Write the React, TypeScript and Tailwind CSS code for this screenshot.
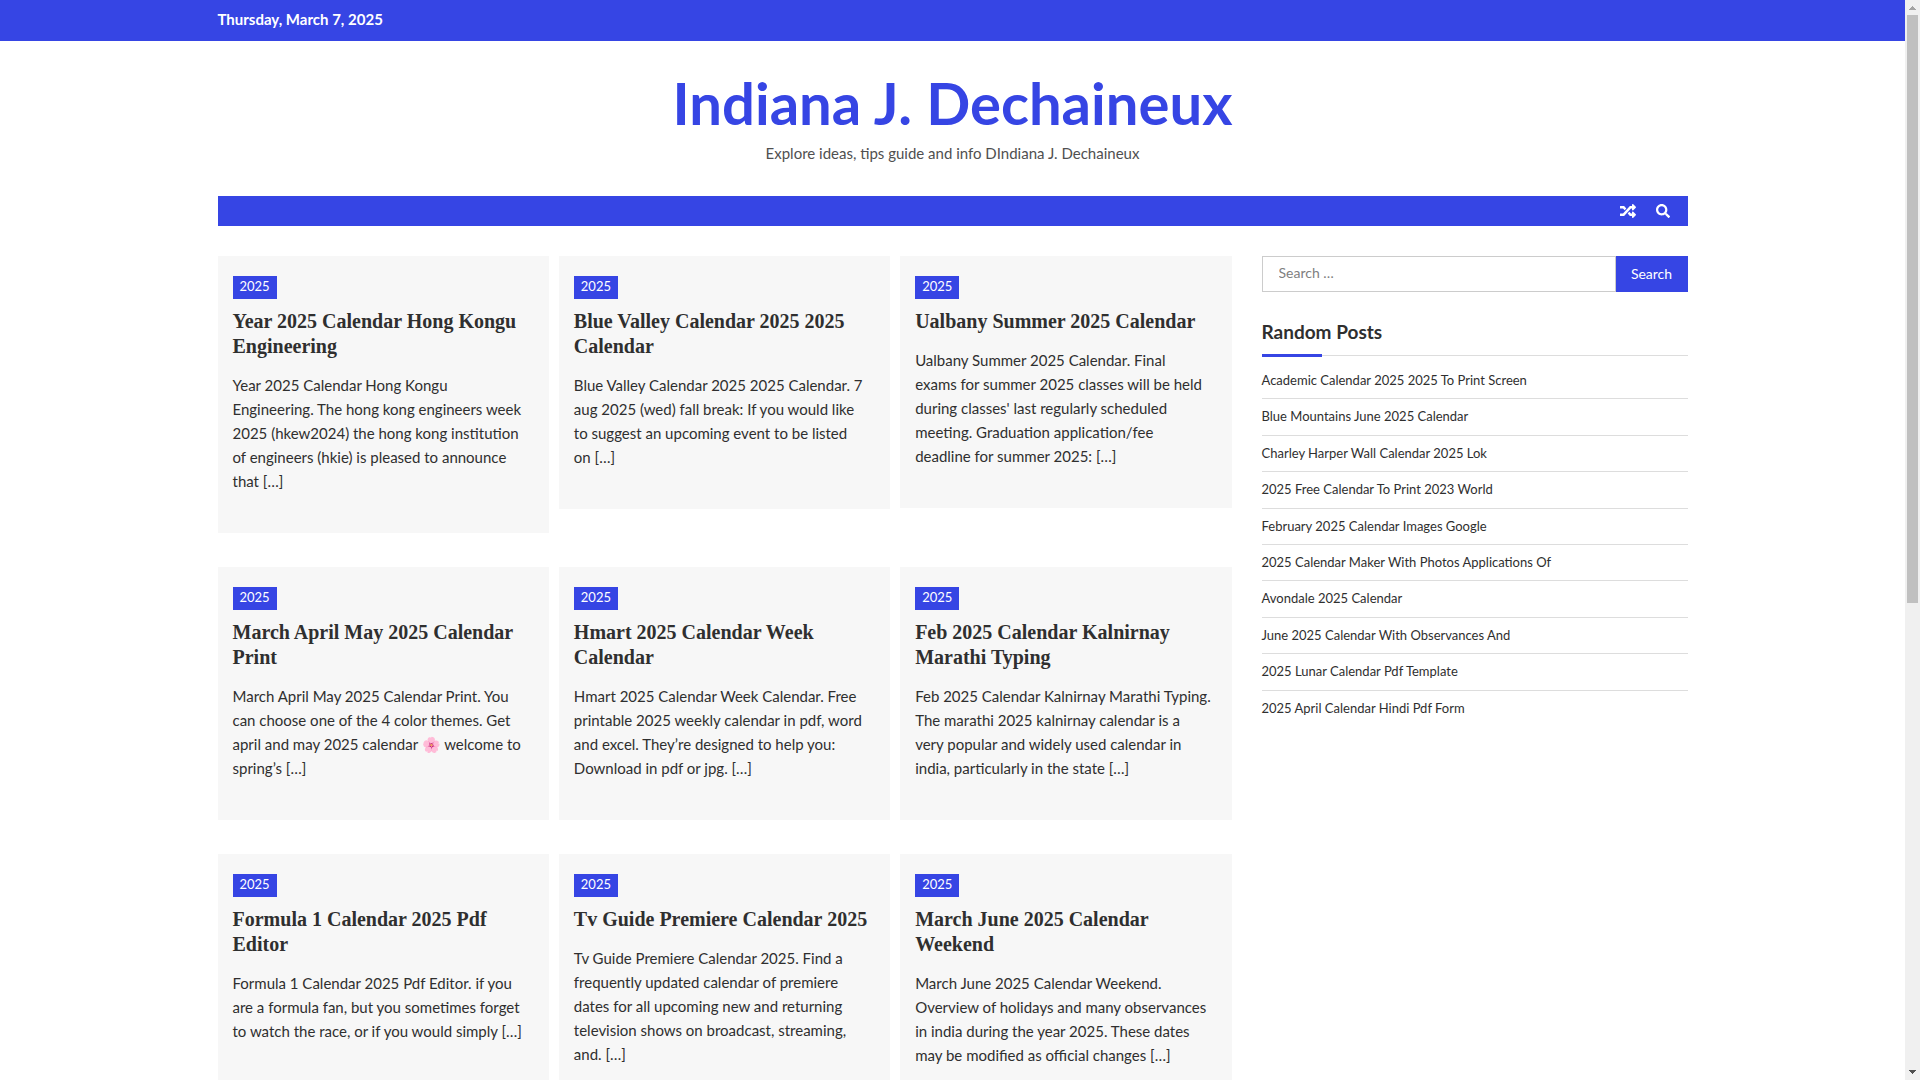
import { FaRandom, FaSearch } from 'react-icons/fa';

const posts = [
  {
    title: 'Year 2025 Calendar Hong Kongu\nEngineering',
    excerpt:
      'Year 2025 Calendar Hong Kongu\nEngineering. The hong kong engineers week\n2025 (hkew2024) the hong kong institution\nof engineers (hkie) is pleased to announce\nthat […]',
  },
  {
    title: 'Blue Valley Calendar 2025 2025\nCalendar',
    excerpt:
      'Blue Valley Calendar 2025 2025 Calendar. 7\naug 2025 (wed) fall break: If you would like\nto suggest an upcoming event to be listed\non […]',
  },
  {
    title: 'Ualbany Summer 2025 Calendar',
    excerpt:
      "Ualbany Summer 2025 Calendar. Final\nexams for summer 2025 classes will be held\nduring classes' last regularly scheduled\nmeeting. Graduation application/fee\ndeadline for summer 2025: […]",
  },
  {
    title: 'March April May 2025 Calendar\nPrint',
    excerpt:
      'March April May 2025 Calendar Print. You\ncan choose one of the 4 color themes. Get\napril and may 2025 calendar 🌸 welcome to\nspring’s […]',
  },
  {
    title: 'Hmart 2025 Calendar Week\nCalendar',
    excerpt:
      'Hmart 2025 Calendar Week Calendar. Free\nprintable 2025 weekly calendar in pdf, word\nand excel. They’re designed to help you:\nDownload in pdf or jpg. […]',
  },
  {
    title: 'Feb 2025 Calendar Kalnirnay\nMarathi Typing',
    excerpt:
      'Feb 2025 Calendar Kalnirnay Marathi Typing.\nThe marathi 2025 kalnirnay calendar is a\nvery popular and widely used calendar in\nindia, particularly in the state […]',
  },
  {
    title: 'Formula 1 Calendar 2025 Pdf\nEditor',
    excerpt:
      'Formula 1 Calendar 2025 Pdf Editor. if you\nare a formula fan, but you sometimes forget\nto watch the race, or if you would simply […]',
  },
  {
    title: 'Tv Guide Premiere Calendar 2025',
    excerpt:
      'Tv Guide Premiere Calendar 2025. Find a\nfrequently updated calendar of premiere\ndates for all upcoming new and returning\ntelevision shows on broadcast, streaming,\nand. […]',
  },
  {
    title: 'March June 2025 Calendar\nWeekend',
    excerpt:
      'March June 2025 Calendar Weekend.\nOverview of holidays and many observances\nin india during the year 2025. These dates\nmay be modified as official changes […]',
  },
];

const randomPosts = [
  'Academic Calendar 2025 2025 To Print Screen',
  'Blue Mountains June 2025 Calendar',
  'Charley Harper Wall Calendar 2025 Lok',
  '2025 Free Calendar To Print 2023 World',
  'February 2025 Calendar Images Google',
  '2025 Calendar Maker With Photos Applications Of',
  'Avondale 2025 Calendar',
  'June 2025 Calendar With Observances And',
  '2025 Lunar Calendar Pdf Template',
  '2025 April Calendar Hindi Pdf Form',
];

function PostCard({ title, excerpt }: { title: string; excerpt: string }) {
  return (
    <article className="bg-[#f7f7f7] px-[15px] pt-5 pb-10">
      <a href="#" className="block w-fit bg-[#3645e4] px-[7px] pb-[2px] text-[13px] leading-[21px] text-white">
        2025
      </a>
      <h2 className="mt-[10px] font-['Liberation_Serif',serif] text-xl leading-[25px] font-bold whitespace-pre-line">
        <a href="#">{title}</a>
      </h2>
      <p className="mt-[14px] text-[15px] leading-6 whitespace-pre-line">{excerpt}</p>
    </article>
  );
}

function Sidebar() {
  return (
    <aside className="w-[426px] shrink-0">
      <form className="flex h-9" onSubmit={(e) => e.preventDefault()}>
        <input
          type="search"
          aria-label="Search for:"
          placeholder="Search …"
          className="min-w-0 flex-1 border border-[#cccccc] px-4 pb-[2px] text-sm placeholder:text-[#808080]"
        />
        <button type="submit" className="w-[72px] bg-[#3645e4] text-sm text-white">
          Search
        </button>
      </form>

      <section className="mt-7">
        <h2 className="text-[19px] leading-6 font-bold">Random Posts</h2>
        <div className="mt-[10px] flex items-center">
          <span className="h-[3px] w-[60px] bg-[#3645e4]" />
          <span className="h-px flex-1 bg-[#dddddd]" />
        </div>
        <ul className="mt-[6px] grid h-[364px] auto-rows-fr">
          {randomPosts.map((post) => (
            <li key={post} className="flex items-center border-b border-[#dddddd] text-[13px] last:border-b-0">
              <a href="#">{post}</a>
            </li>
          ))}
        </ul>
      </section>
    </aside>
  );
}

function Scrollbar() {
  return (
    <div className="flex w-[15px] shrink-0 flex-col items-center bg-[#f0f0f0]" aria-hidden="true">
      <svg width="15" height="15" viewBox="0 0 15 15" fill="#a3a3a3" shapeRendering="crispEdges">
        <path d="M7 6h1v1h1v1h1v1h1v1H4V9h1V8h1V7h1z" />
      </svg>
      <div className="w-full flex-1 px-[2px]">
        <div className="h-[56%] bg-[#c0c0c0]" />
      </div>
      <svg width="15" height="15" viewBox="0 0 15 15" fill="#505050" shapeRendering="crispEdges">
        <path d="M4 5h7v1h-1v1H9v1H8v1H7V8H6V7H5V6H4z" />
      </svg>
    </div>
  );
}

export default function App() {
  return (
    <div className="flex h-screen overflow-hidden bg-white font-[Lato,sans-serif] text-[#2f2f2f]">
      <div className="min-w-0 flex-1">
        {/* Top bar */}
        <div className="bg-[#3645e4] pb-[2px]">
          <div className="mx-auto max-w-[1470px] text-[15px] leading-[39px] font-bold text-white">
            Thursday, March 7, 2025
          </div>
        </div>

        {/* Branding */}
        <header className="pt-[26px] pb-[31px] text-center">
          <h1 className="text-[58px] leading-[72px] font-bold text-[#3645e4]">
            <a href="#">Indiana J. Dechaineux</a>
          </h1>
          <p className="mt-[2px] text-[15px] leading-6 text-[#505050]">
            Explore ideas, tips guide and info DIndiana J. Dechaineux
          </p>
        </header>

        <div className="mx-auto max-w-[1470px]">
          <nav className="flex h-[30px] items-center justify-end gap-5 bg-[#3645e4] px-[18px] text-white">
            <a href="#" aria-label="View random post">
              <FaRandom size={16} />
            </a>
            <button type="button" aria-label="Open search">
              <FaSearch size={14} />
            </button>
          </nav>

          <div className="mt-[30px] flex items-start gap-[30px]">
            <main className="grid flex-1 grid-cols-3 items-start gap-x-[10px] gap-y-[34px]">
              {posts.map((post) => (
                <PostCard key={post.title} {...post} />
              ))}
            </main>
            <Sidebar />
          </div>
        </div>
      </div>
      <Scrollbar />
    </div>
  );
}
